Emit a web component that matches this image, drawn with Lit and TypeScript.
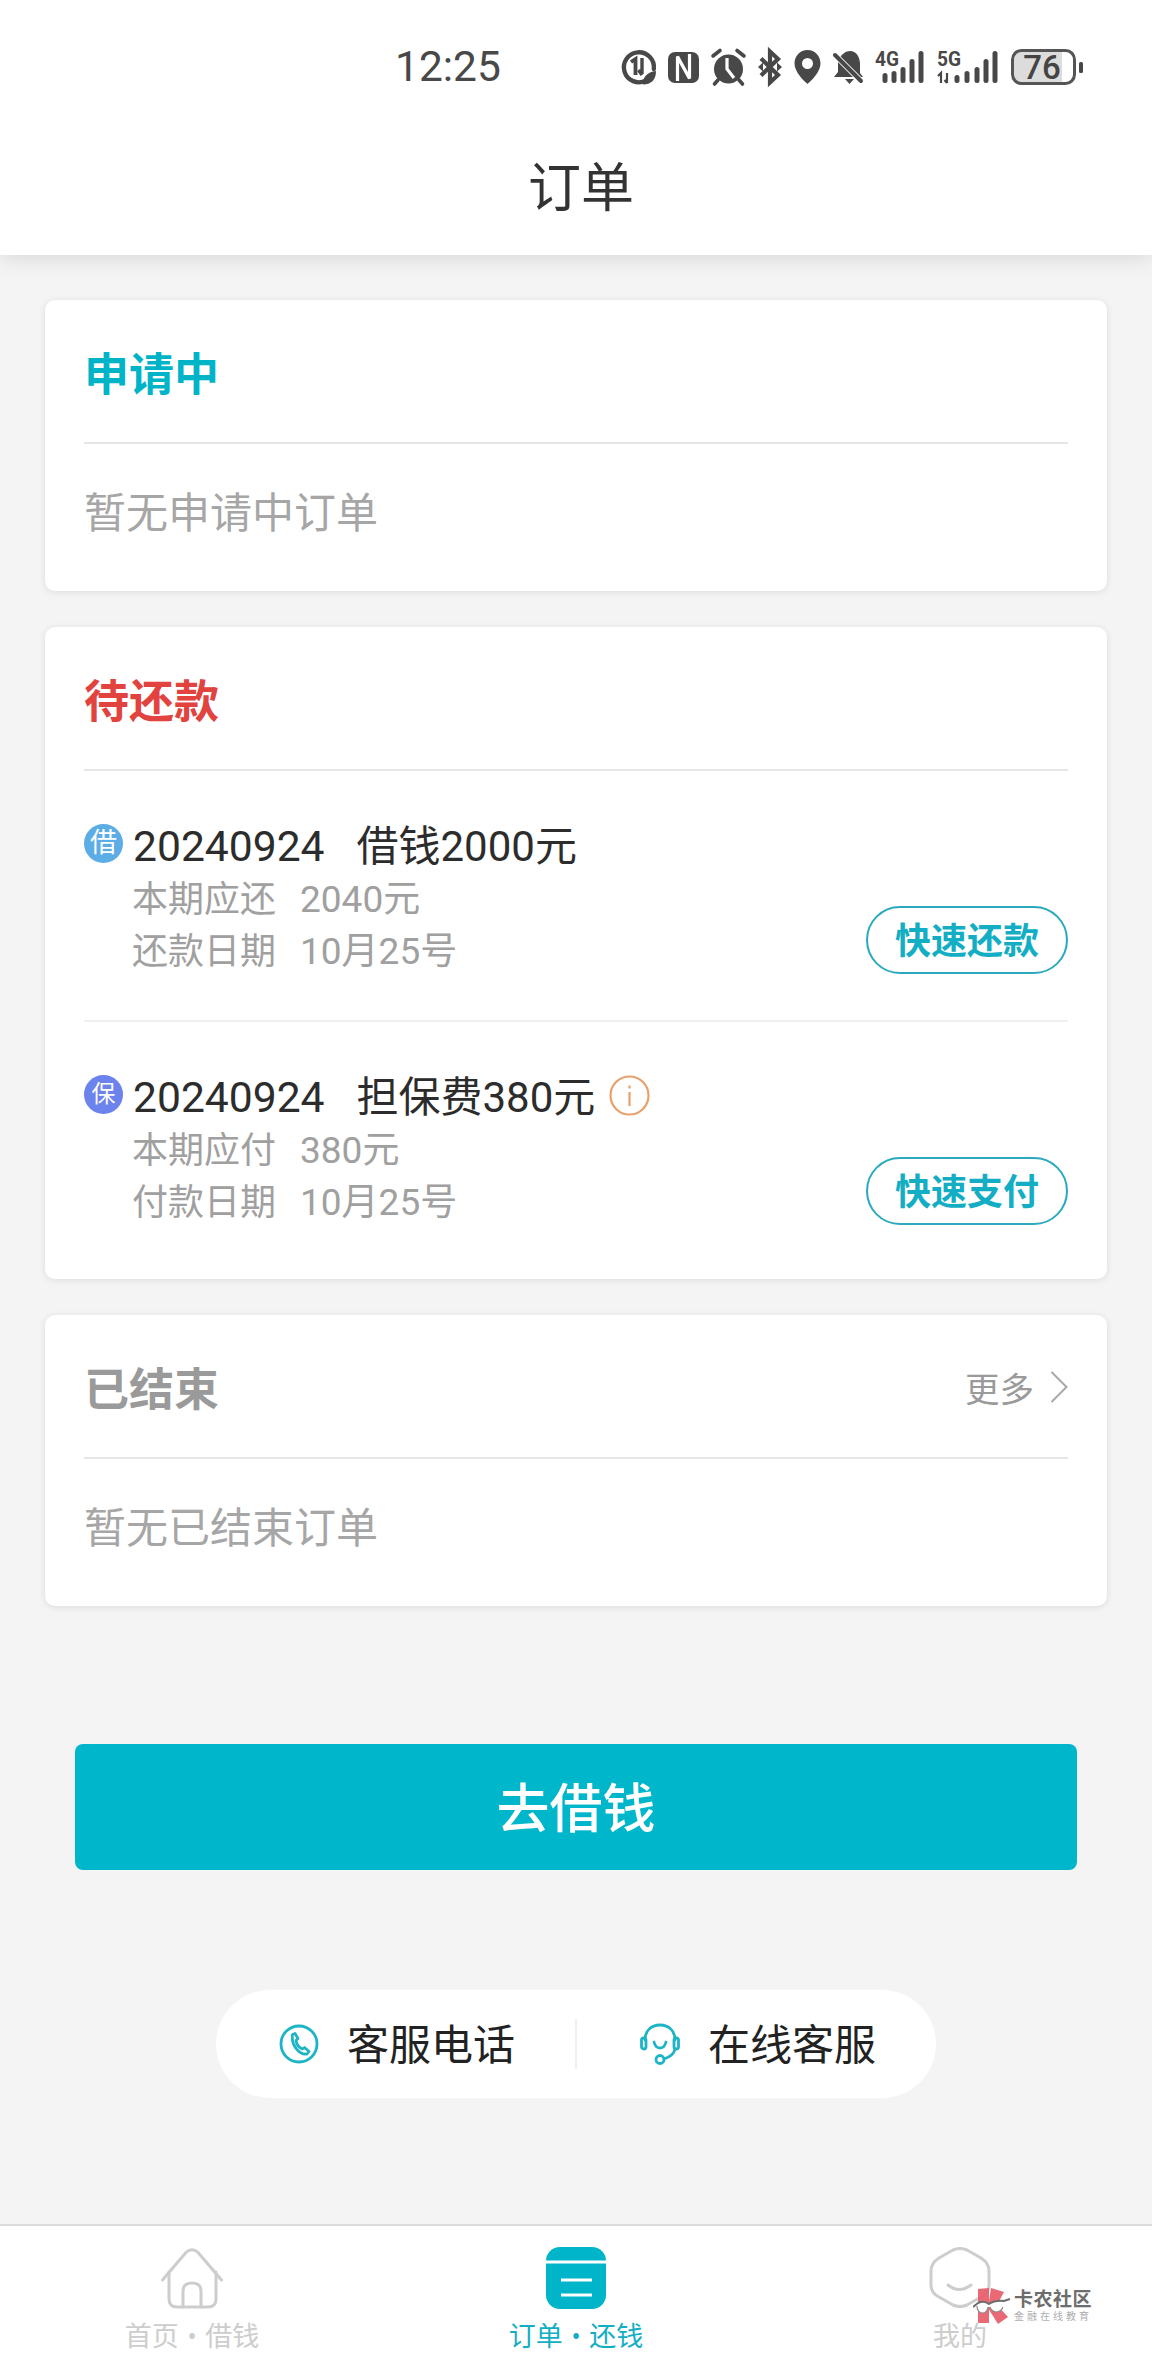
import { LitElement, html, css, svg } from "lit";
import { customElement } from "lit/decorators.js";

const D = "#484848";

const statusIcons = html`
  <svg width="34" height="36" viewBox="0 0 34 36">
    <path d="M24 31.500A15 15 0 1 1 31.800 20" fill="none" stroke="${D}" stroke-width="4.400" stroke-linecap="round"/>
    <path d="M9 13L13.500 10V26" fill="none" stroke="${D}" stroke-width="3.800"/>
    <path d="M20 9V25M16.500 21L20 26" fill="none" stroke="${D}" stroke-width="3.400"/>
    <path d="M34 22C34 31 29 35.500 21 35.500C20 29 25 23 34 22Z" fill="${D}"/>
  </svg>
  <svg width="31" height="36" viewBox="0 0 31 36">
    <rect x="0" y="3" width="31" height="31" rx="7" fill="${D}"/>
    <path d="M9.500 32V7.500L20 26.500M21.500 5V29.500L11 10.500" fill="none" stroke="#fff" stroke-width="3.200"/>
  </svg>
  <svg width="35" height="36" viewBox="0 0 35 36">
    <circle cx="17.500" cy="20" r="14.500" fill="${D}"/>
    <path d="M2 7L9 1.500M33 7L26 1.500M7 31L3.500 35M28 31L31.500 35" stroke="${D}" stroke-width="3.600" stroke-linecap="round"/>
    <path d="M16 9V20L23 29" fill="none" stroke="#fff" stroke-width="3.200"/>
  </svg>
  <svg width="24" height="36" viewBox="0 0 24 36">
    <path d="M3 9.500L20 26L12 33.500V2.500L20 10L3 26.500" fill="none" stroke="${D}" stroke-width="4.200"/>
    <path d="M0 18L5 13.500V22.500ZM24 18L19 13.500V22.500Z" fill="${D}"/>
  </svg>
  <svg width="27" height="36" viewBox="0 0 27 36">
    <path fill-rule="evenodd" fill="${D}" d="M13.500 1C6 1 .5 7 .5 14.500C.5 23 10 32 13.500 35C17 32 26.500 23 26.500 14.500C26.500 7 21 1 13.500 1ZM13.500 9A5.500 5.500 0 1 1 13.500 20A5.500 5.500 0 1 1 13.500 9Z"/>
  </svg>
  <svg width="30" height="36" viewBox="0 0 30 36">
    <path d="M5 12C8 5 13 2 17 2C24 2 27 9 27 15V24L30 28H1L5 23Z" fill="${D}"/>
    <path d="M12 30H21L16.500 35Z" fill="${D}"/>
    <path d="M0 4L30 34" stroke="#fff" stroke-width="6"/>
    <path d="M2 6L28 32" stroke="${D}" stroke-width="4" stroke-linecap="round"/>
  </svg>
  <svg width="50" height="36" viewBox="0 0 50 36">
    <text x="0" y="17" class="net" textLength="24" lengthAdjust="spacingAndGlyphs">4G</text>
    ${[[10, 24], [19, 22], [28, 18], [37, 10], [46, 2]].map(([x, t]) =>
      svg`<rect x="${x - 2.5}" y="${t}" width="5" height="${34 - t}" rx="2.500" fill="${D}"/>`)}
  </svg>
  <svg width="62" height="36" viewBox="0 0 62 36">
    <text x="0" y="17" class="net" textLength="24" lengthAdjust="spacingAndGlyphs">5G</text>
    <path d="M1 27L4 24V34M10 24V34M7.500 31L10 34" fill="none" stroke="${D}" stroke-width="2.200"/>
    ${[[20, 26], [30, 22], [40, 18], [49, 10], [58, 2]].map(([x, t]) =>
      svg`<rect x="${x - 2.5}" y="${t}" width="5" height="${34 - t}" rx="2.500" fill="${D}"/>`)}
  </svg>
  <svg width="72" height="36" viewBox="0 0 72 36">
    <path d="M8 3H51V33H8Q3 33 3 28V8Q3 3 8 3Z" fill="#dcdcdc"/>
    <rect x="1.500" y="1.500" width="62" height="33" rx="9" fill="none" stroke="#555" stroke-width="3"/>
    <text x="31" y="30" text-anchor="middle" class="bat">76</text>
    <rect x="68" y="13" width="4" height="11" rx="1.500" fill="${D}"/>
  </svg>
`;

const phoneIcon = html`
  <svg class="pill-icon" width="40" height="40" viewBox="0 0 40 40" fill="none" stroke="#1db4c6" stroke-width="2.800">
    <circle cx="20" cy="20" r="18"/>
    <path d="M13.500 10.500L16 9.500L19 14.500L17 16.500C17.500 20 20 23.500 23.500 25L25.500 23.500L30 27.500L28 30C20 31 12 21 13.500 10.500Z" stroke-linejoin="round"/>
  </svg>`;

const headsetIcon = html`
  <svg class="pill-icon" width="40" height="42" viewBox="0 0 40 42" fill="none" stroke="#1db4c6" stroke-width="2.800" stroke-linecap="round">
    <path d="M5 17C5 8 11 2 20 2C29 2 35 8 35 17"/>
    <rect x="1.500" y="15" width="4.500" height="11" rx="2.200"/>
    <rect x="34" y="15" width="4.500" height="11" rx="2.200"/>
    <path d="M14 19C15 23 17 25 20 25C23 25 25 23 26 19"/>
    <path d="M35 26C34 31 30 34 24 36"/>
    <circle cx="20" cy="36.500" r="4"/>
  </svg>`;

const homeIcon = html`
  <svg width="62" height="62" viewBox="0 0 62 62" fill="none" stroke="#cdcdcd" stroke-width="3" stroke-linecap="round" stroke-linejoin="round">
    <path d="M1.500 33L25 5.500Q31 0 37 5.500L60.500 33"/>
    <path d="M8 25V52Q8 60 16 60H47Q55 60 55 52V25"/>
    <path d="M22 60V44Q22 36 31 36Q40 36 40 44V60"/>
  </svg>`;

const orderIcon = html`
  <svg width="60" height="62" viewBox="0 0 60 62">
    <rect width="60" height="62" rx="14" fill="#00b5ca"/>
    <path d="M0 15H60M15 33H46M15 48H46" stroke="#fff" stroke-width="3"/>
  </svg>`;

const meIcon = html`
  <svg width="62" height="62" viewBox="0 0 62 62" fill="none" stroke="#cdcdcd" stroke-width="3" stroke-linecap="round">
    <path d="M24 3Q31 0 38 3L52 11Q60 16 60 24V38Q60 46 52 50L38 58Q31 61 24 58L10 50Q2 46 2 38V24Q2 16 10 11Z"/>
    <path d="M19 38Q30 47 42 38"/>
  </svg>`;

const logo = html`
  <svg width="38" height="36" viewBox="0 0 38 36">
    <g fill="#e8616d">
      <path d="M5 1L16 0V35L5 35Z"/>
      <path d="M18 0L31 4L24 17L35 29L25 36L15 20Z"/>
    </g>
    <path d="M5 15Q11 12 16 16Q22 12 31 13L30 19Q28 24 23 24Q18 23 17 19L15 19Q14 25 9 25Q4 24 4 18Z" fill="#fff"/>
    <path d="M0 19L5 15Q11 12 16 16Q22 12 31 13L37 11" fill="none" stroke="#666" stroke-width="2"/>
    <path d="M4 18Q4 24 9 25Q14 25 15 19M17 19Q18 23 23 24Q28 24 30 19" fill="none" stroke="#888" stroke-width="1.200"/>
  </svg>`;

interface Row {
  kind: string;
  badge: string;
  date: string;
  what: string;
  info?: boolean;
  l1: string;
  v1: string;
  l2: string;
  v2: string;
  action: string;
}

const rows: Row[] = [
  { kind: "b-blue", badge: "借", date: "20240924", what: "借钱2000元", l1: "本期应还", v1: "2040元", l2: "还款日期", v2: "10月25号", action: "快速还款" },
  { kind: "b-violet", badge: "保", date: "20240924", what: "担保费380元", info: true, l1: "本期应付", v1: "380元", l2: "付款日期", v2: "10月25号", action: "快速支付" },
];

@customElement("app-root")
export class AppRoot extends LitElement {
  static styles = css`
    :host {
      display: block;
      width: 1152px;
      height: 2376px;
      position: relative;
      font-family: Roboto, "Noto Sans CJK SC", "Noto Sans", sans-serif;
      background: #f4f4f4;
      overflow: hidden;
    }
    .page { display: flex; flex-direction: column; height: 100%; }
    .top {
      background: #fff;
      height: 255px;
      box-sizing: border-box;
      box-shadow: 0 2px 22px rgba(0, 0, 0, 0.13);
      position: relative;
      z-index: 1;
      flex: none;
    }
    .status {
      height: 134px;
      display: flex;
      align-items: center;
      padding-left: 395px;
      box-sizing: border-box;
    }
    .time { font-size: 42.500px; color: #484848; width: 227px; line-height: 1; }
    .icons { display: flex; gap: 12px; align-items: center; }
    .icons svg { display: block; flex: none; overflow: visible; }
    .net { font: 700 20px Roboto, sans-serif; fill: #484848; }
    .bat { font: 500 33px Roboto, sans-serif; fill: #444; }
    .title {
      height: 106px;
      display: flex;
      align-items: center;
      justify-content: center;
      padding: 0 0 6px 10px;
      box-sizing: border-box;
      font-size: 53px;
      color: #333;
    }
    .main {
      flex: 1;
      display: flex;
      flex-direction: column;
      padding: 45px 45px 0;
    }
    .card {
      background: #fff;
      border-radius: 10px;
      box-shadow: 0 1px 7px rgba(0, 0, 0, 0.1);
      margin-bottom: 36px;
      padding: 0 39px;
    }
    .head {
      height: 142px;
      display: flex;
      align-items: center;
      justify-content: space-between;
      font-size: 45px;
      font-weight: 700;
    }
    .line { height: 2px; background: #e6e6e6; }
    .line.soft { background: #f0f0f0; }
    .teal { color: #00b4c8; }
    .red { color: #e2433f; }
    .grey { color: #9a9a9a; }
    .more {
      display: flex;
      align-items: center;
      font-size: 34.500px;
      font-weight: 400;
      color: #9a9a9a;
      gap: 16px;
      padding-top: 2px;
    }
    .more svg { display: block; }
    .empty {
      padding: 45px 0 52px;
      font-size: 42px;
      line-height: 50px;
      color: #a6a6a6;
    }
    .row { display: flex; padding: 48px 0 42px; }
    .row.last { padding-bottom: 50px; }
    .badge {
      width: 39px;
      height: 39px;
      border-radius: 50%;
      margin: 5px 10px 0 0;
      flex: none;
      color: #fff;
      font-size: 27px;
      line-height: 39px;
      text-align: center;
    }
    .b-blue { background: #5cade6; }
    .b-violet { background: #6c82ec; font-size: 24px; }
    .body { flex: 1; }
    .rowtitle {
      display: flex;
      align-items: center;
      height: 50px;
      margin-bottom: 5px;
      font-size: 42px;
      color: #2c2c2c;
    }
    .rowtitle .date { font-size: 42.600px; margin-top: 3px; }
    .rowtitle .what { margin: -4px 0 0 32px; }
    .info { margin-left: 14px; display: block; }
    .sub {
      font-size: 36px;
      line-height: 52px;
      color: #a0a0a0;
      display: flex;
      margin-left: -1px;
    }
    .sub .k { width: 168px; }
    .sub .v { font-size: 37px; }
    .btn {
      align-self: flex-end;
      margin-bottom: 4px;
      width: 202px;
      height: 68px;
      box-sizing: border-box;
      border: 2.500px solid #2aa9bf;
      border-radius: 34px;
      padding-bottom: 4px;
      display: flex;
      align-items: center;
      justify-content: center;
      color: #14aec4;
      font-size: 36px;
      font-weight: 700;
      flex: none;
    }
    .go {
      margin: 102px 30px 0;
      height: 126px;
      background: #00b6cb;
      border-radius: 8px;
      box-sizing: border-box;
      padding-bottom: 5px;
      color: #fff;
      display: flex;
      align-items: center;
      justify-content: center;
      font-size: 53px;
      font-weight: 500;
    }
    .pill {
      align-self: center;
      margin-top: 120px;
      width: 720px;
      height: 108px;
      border-radius: 54px;
      background: #fff;
      display: grid;
      grid-template-columns: 1fr 2px 1fr;
      align-items: center;
    }
    .pill .sep { height: 50px; background: #efefef; }
    .pill .item {
      display: flex;
      align-items: center;
      justify-content: center;
      gap: 28px;
      padding-left: 3px;
      font-size: 42px;
      color: #222;
    }
    .pill .item span { margin-top: -6px; }
    .pill-icon { display: block; flex: none; }
    .tabs {
      flex: none;
      height: 152px;
      box-sizing: border-box;
      border-top: 2px solid #dcdcdc;
      background: #fff;
      display: grid;
      grid-template-columns: repeat(3, 1fr);
    }
    .tab {
      display: flex;
      flex-direction: column;
      align-items: center;
      padding-top: 21px;
      font-size: 27px;
      word-spacing: 2px;
      line-height: 34px;
      color: #cdcdcd;
    }
    .tab svg { display: block; margin-bottom: 11px; }
    .tab.on { color: #14aec4; }
    .mark {
      position: absolute;
      left: 973px;
      top: 2288px;
      display: flex;
      align-items: center;
      gap: 3px;
      opacity: 0.95;
    }
    .mark svg { display: block; }
    .mark-a { font-size: 19px; font-weight: 700; line-height: 20px; color: #666; letter-spacing: 0.500px; }
    .mark-b { font-size: 10px; line-height: 12px; color: #aaa; letter-spacing: 3px; margin-top: 1px; white-space: nowrap; }
  `;

  private renderRow(r: Row, last: boolean) {
    return html`
      <div class="row ${last ? "last" : ""}">
        <div class="badge ${r.kind}">${r.badge}</div>
        <div class="body">
          <div class="rowtitle">
            <span class="date">${r.date}</span><span class="what">${r.what}</span>
            ${r.info
              ? html`<svg class="info" width="41" height="41" viewBox="0 0 41 41" fill="none" stroke="#e9a16b" stroke-width="2.200">
                  <circle cx="20.500" cy="20.500" r="19"/>
                  <path d="M20.500 17V31M20.500 10.500V13.500"/>
                </svg>`
              : null}
          </div>
          <div class="sub"><span class="k">${r.l1}</span><span class="v">${r.v1}</span></div>
          <div class="sub"><span class="k">${r.l2}</span><span class="v">${r.v2}</span></div>
        </div>
        <div class="btn">${r.action}</div>
      </div>
    `;
  }

  render() {
    return html`
      <div class="page">
        <div class="top">
          <div class="status">
            <div class="time">12:25</div>
            <div class="icons">${statusIcons}</div>
          </div>
          <div class="title">订单</div>
        </div>
        <div class="main">
          <div class="card">
            <div class="head teal">申请中</div>
            <div class="line"></div>
            <div class="empty">暂无申请中订单</div>
          </div>
          <div class="card">
            <div class="head red">待还款</div>
            <div class="line"></div>
            ${this.renderRow(rows[0], false)}
            <div class="line soft"></div>
            ${this.renderRow(rows[1], true)}
          </div>
          <div class="card">
            <div class="head grey">
              <span>已结束</span>
              <span class="more">更多
                <svg width="18" height="32" viewBox="0 0 18 32" fill="none" stroke="#a8a8a8" stroke-width="2">
                  <path d="M1.500 1L16.500 16L1.500 31"/>
                </svg>
              </span>
            </div>
            <div class="line"></div>
            <div class="empty">暂无已结束订单</div>
          </div>
          <div class="go">去借钱</div>
          <div class="pill">
            <div class="item">${phoneIcon}<span>客服电话</span></div>
            <div class="sep"></div>
            <div class="item">${headsetIcon}<span>在线客服</span></div>
          </div>
        </div>
        <div class="tabs">
          <div class="tab">${homeIcon}<span>首页 • 借钱</span></div>
          <div class="tab on">${orderIcon}<span>订单 • 还钱</span></div>
          <div class="tab">${meIcon}<span>我的</span></div>
        </div>
      </div>
      <div class="mark">
        ${logo}
        <div>
          <div class="mark-a">卡农社区</div>
          <div class="mark-b">金融在线教育</div>
        </div>
      </div>
    `;
  }
}
